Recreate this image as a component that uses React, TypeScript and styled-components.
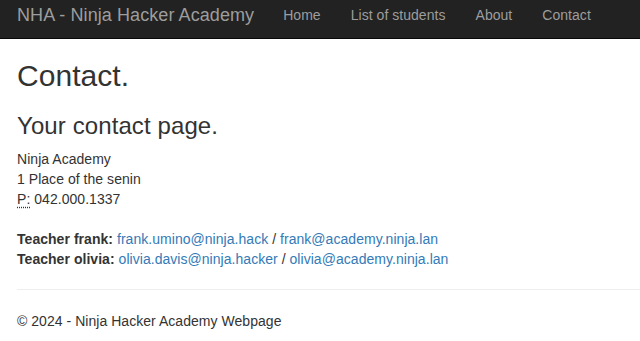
import React from "react";
import styled, { createGlobalStyle } from "styled-components";

const GlobalStyle = createGlobalStyle`
  html, body {
    margin: 0;
    padding: 0;
    background: #fff;
  }
  body {
    font-family: "Liberation Sans", Arial, Helvetica, sans-serif;
    font-size: 14px;
    line-height: 1.42857143;
    color: #333;
    letter-spacing: 0.04px;
  }
  * {
    box-sizing: border-box;
  }
`;

const Navbar = styled.nav`
  display: flex;
  align-items: flex-start;
  height: 39px;
  background-color: #222;
  border-bottom: 1px solid #080808;
  padding-left: 17px;
`;

const Brand = styled.a`
  padding: 5px 14px 0 0;
  font-size: 18px;
  line-height: 20px;
  letter-spacing: 0.08px;
  color: #9d9d9d;
  text-decoration: none;
  white-space: nowrap;
`;

const NavList = styled.ul`
  display: flex;
  list-style: none;
  margin: 0;
  padding: 0;
`;

const NavLink = styled.a`
  display: block;
  padding: 5px 15px 0;
  line-height: 20px;
  color: #9d9d9d;
  text-decoration: none;
  white-space: nowrap;
`;

const Body = styled.main`
  padding: 0 0 0 17px;
  overflow: hidden;
`;

const Title = styled.h2`
  margin: 20px 0 10px;
  font-size: 30px;
  font-weight: 500;
  line-height: 1.1;
`;

const Subtitle = styled.h3`
  margin: 21px 0 10px;
  font-size: 24px;
  font-weight: 500;
  line-height: 1.1;
  letter-spacing: 0.1px;
`;

const Address = styled.address`
  margin-bottom: 20px;
  font-style: normal;
`;

const Abbr = styled.abbr`
  text-decoration: underline dotted;
  text-underline-offset: 2px;
  cursor: help;
`;

const Link = styled.a`
  color: #337ab7;
  text-decoration: none;
`;

const Rule = styled.hr`
  margin: 20px 0 21px;
  border: 0;
  border-top: 1px solid #eee;
`;

const Footer = styled.footer`
  p {
    margin: 0 0 10px;
  }
`;

const teachers = [
  { name: "frank", mails: ["frank.umino@ninja.hack", "frank@academy.ninja.lan"] },
  { name: "olivia", mails: ["olivia.davis@ninja.hacker", "olivia@academy.ninja.lan"] },
];

const App = () => {
  return (
    <>
      <GlobalStyle />
      <Navbar>
        <Brand href="#">NHA - Ninja Hacker Academy</Brand>
        <NavList>
          {["Home", "List of students", "About", "Contact"].map((item) => (
            <li key={item}>
              <NavLink href="#">{item}</NavLink>
            </li>
          ))}
        </NavList>
      </Navbar>
      <Body>
        <Title>Contact.</Title>
        <Subtitle>Your contact page.</Subtitle>
        <Address>
          Ninja Academy
          <br />
          1 Place of the senin
          <br />
          <Abbr title="Phone">P:</Abbr> 042.000.1337
        </Address>
        <Address>
          {teachers.map((t) => (
            <React.Fragment key={t.name}>
              <strong>Teacher {t.name}:</strong>{" "}
              <Link href={`mailto:${t.mails[0]}`}>{t.mails[0]}</Link> /{" "}
              <Link href={`mailto:${t.mails[1]}`}>{t.mails[1]}</Link>
              <br />
            </React.Fragment>
          ))}
        </Address>
        <Rule />
        <Footer>
          <p>&copy; 2024 - Ninja Hacker Academy Webpage</p>
        </Footer>
      </Body>
    </>
  );
};

export default App;
